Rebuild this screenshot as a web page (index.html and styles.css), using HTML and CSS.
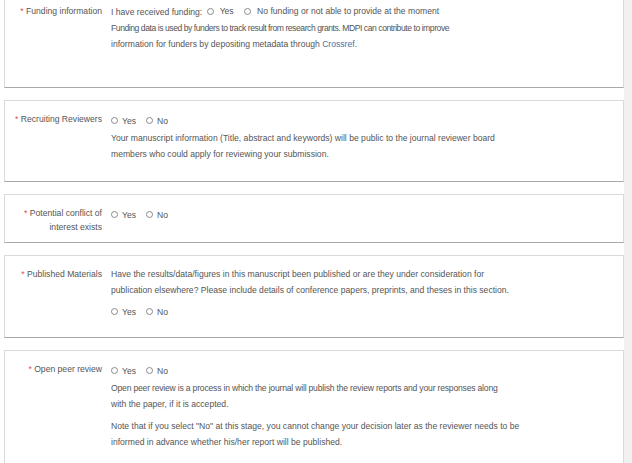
FILE: index.html
```html
<!DOCTYPE html>
<html lang="en">
<head>
    <meta charset="UTF-8">
    <meta name="viewport" content="width=device-width, initial-scale=1.0">
    <title>Submission - Additional Information</title>
    <link rel="stylesheet" href="styles.css">
</head>
<body>
    <div class="page">
        <main class="form-area">
            <section class="panel panel-funding">
                <div class="field-label"><span class="req">*</span> Funding information</div>
                <div class="field-body">
                    <p class="line">I have received funding:
                        <label class="choice"><input type="radio" name="funding"> Yes</label>
                        <label class="choice"><input type="radio" name="funding"> No funding or not able to provide at the moment</label>
                    </p>
                    <p class="line"><span class="tight">Funding data is used by funders to track result from research grants. MDPI can contribute to improve</span><br>
                        information for funders by depositing metadata through <a href="#">Crossref</a>.</p>
                </div>
            </section>

            <section class="panel panel-reviewers">
                <div class="field-label"><span class="req">*</span> Recruiting Reviewers</div>
                <div class="field-body">
                    <div class="choices">
                        <label class="choice"><input type="radio" name="reviewers"> Yes</label>
                        <label class="choice"><input type="radio" name="reviewers"> No</label>
                    </div>
                    <p class="line">Your manuscript information (Title, abstract and keywords) will be public to the journal reviewer board<br>
                        members who could apply for reviewing your submission.</p>
                </div>
            </section>

            <section class="panel panel-conflict">
                <div class="field-label"><span class="req">*</span> Potential conflict of<br>interest exists</div>
                <div class="field-body">
                    <div class="choices">
                        <label class="choice"><input type="radio" name="conflict"> Yes</label>
                        <label class="choice"><input type="radio" name="conflict"> No</label>
                    </div>
                </div>
            </section>

            <section class="panel panel-published">
                <div class="field-label"><span class="req">*</span> Published Materials</div>
                <div class="field-body">
                    <p class="line">Have the results/data/figures in this manuscript been published or are they under consideration for<br>
                        publication elsewhere? Please include details of conference papers, preprints, and theses in this section.</p>
                    <div class="choices spaced">
                        <label class="choice"><input type="radio" name="published"> Yes</label>
                        <label class="choice"><input type="radio" name="published"> No</label>
                    </div>
                </div>
            </section>

            <section class="panel panel-open">
                <div class="field-label"><span class="req">*</span> Open peer review</div>
                <div class="field-body">
                    <div class="choices">
                        <label class="choice"><input type="radio" name="open"> Yes</label>
                        <label class="choice"><input type="radio" name="open"> No</label>
                    </div>
                    <p class="line"><span class="snug">Open peer review is a process in which the journal will publish the review reports and your responses along</span><br>
                        with the paper, if it is accepted.</p>
                    <p class="line spaced">Note that if you select "No" at this stage, you cannot change your decision later as the reviewer needs to be<br>
                        informed in advance whether his/her report will be published.</p>
                </div>
            </section>
        </main>
        <div class="scroll-strip"></div>
    </div>
</body>
</html>
```

FILE: styles.css
```css
html, body {
    margin: 0;
    padding: 0;
    height: 100%;
    overflow: hidden;
}
body {
    background: #fff;
    font-family: 'Liberation Sans', Arial, sans-serif;
    font-size: 8.6px;
    color: #555;
}
.page {
    display: flex;
    height: 100%;
}
.form-area {
    flex: 1;
    padding-left: 4px;
    margin-top: -8px;
}
.scroll-strip {
    width: 8px;
    background: #f1f1f1;
}
.panel {
    display: flex;
    gap: 9px;
    background: #fff;
    border: 1px solid #dadada;
    border-bottom-color: #a9a9a9;
    padding-top: 10px;
    margin-bottom: 12px;
    box-sizing: border-box;
}
.field-label {
    width: 97px;
    flex-shrink: 0;
    text-align: right;
    line-height: 14px;
    padding-top: 1px;
    white-space: nowrap;
}
.req {
    color: #d9534f;
}
.field-body {
    flex: 1;
}
.line {
    margin: 0;
    line-height: 16px;
}
.line.spaced {
    margin-top: 6px;
}
/* these two lines sit narrower in the original capture */
.tight {
    letter-spacing: -0.45px;
}
.snug {
    letter-spacing: -0.2px;
}
.choices {
    display: flex;
    align-items: center;
    height: 19px;
}
.choices.spaced {
    margin-top: 4px;
}
.choice {
    display: inline-flex;
    align-items: center;
    margin-right: 10px;
}
.line .choice {
    margin-right: 6px;
}
.choice input {
    appearance: none;
    -webkit-appearance: none;
    width: 7px;
    height: 7px;
    margin: 0 4px 0 0;
    border: 1px solid #8a8a8a;
    border-radius: 50%;
    background: #fff;
}
.line .choice input {
    margin-left: 2px;
    margin-right: 6px;
}
a {
    color: #4a6fa5;
    text-decoration: none;
}
.panel-funding { height: 96px; }
.panel-reviewers { height: 82px; }
.panel-conflict { height: 49px; }
.panel-published { height: 83px; }
.panel-open { height: 140px; }
```
